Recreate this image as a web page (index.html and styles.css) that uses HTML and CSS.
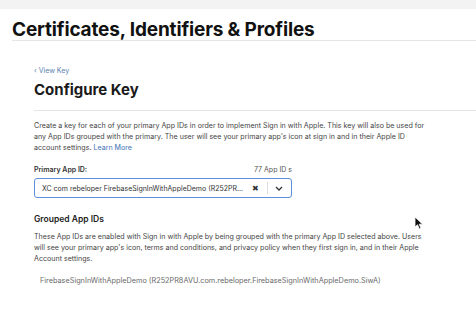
FILE: index.html
```html
<!DOCTYPE html>
<html lang="en">
<head>
  <meta charset="UTF-8">
  <meta name="viewport" content="width=device-width, initial-scale=1.0">
  <title>Configure Key</title>
  <link rel="stylesheet" href="styles.css">
</head>
<body>
  <div class="topbar"></div>

  <header class="page-header">
    <h1>Certificates, Identifiers &amp; Profiles</h1>
  </header>

  <main class="content">
    <a class="back-link" href="#">&lsaquo; View Key</a>
    <h2>Configure Key</h2>

    <div class="section">
      <p class="desc">
        <span>Create a key for each of your primary App IDs in order to implement Sign in with Apple. This key will also be used for</span>
        <span>any App IDs grouped with the primary. The user will see your primary app's icon at sign in and in their Apple ID</span>
        <span>account settings. <a href="#">Learn More</a></span>
      </p>

      <div class="field-head">
        <span class="field-label">Primary App ID:</span>
        <span class="field-count">77 App ID s</span>
      </div>

      <!-- выбранный App ID -->
      <div class="select">
        <span class="select-value">XC com rebeloper FirebaseSignInWithAppleDemo (R252PR...</span>
        <span class="select-clear">&#x2716;</span>
        <span class="select-sep"></span>
        <svg class="select-arrow" width="8" height="5" viewBox="0 0 8 5">
          <path d="M1 1 L4 4 L7 1" fill="none" stroke="#333" stroke-width="1.3"/>
        </svg>
      </div>

      <h3>Grouped App IDs</h3>
      <p class="desc">
        <span>These App IDs are enabled with Sign in with Apple by being grouped with the primary App ID selected above. Users</span>
        <span>will see your primary app's icon, terms and conditions, and privacy policy when they first sign in, and in their Apple</span>
        <span>Account settings.</span>
      </p>

      <div class="grouped-item">FirebaseSignInWithAppleDemo (R252PR8AVU.com.rebeloper.FirebaseSignInWithAppleDemo.SiwA)</div>
    </div>
  </main>

  <svg class="cursor" width="10" height="14" viewBox="0 0 10 14">
    <path d="M1 1 L1 11 L3.5 8.8 L5.4 13 L7 12.3 L5.2 8.2 L8.6 8.2 Z" fill="#111" stroke="#fff" stroke-width="0.8"/>
  </svg>
</body>
</html>
```

FILE: styles.css
```css
* { box-sizing: border-box; }
body {
  margin: 0;
  background: #ffffff;
  font-family: 'Inter', 'Liberation Sans', sans-serif;
  color: #333;
  width: 476px;
  height: 325px;
  overflow: hidden;
  position: relative;
}
.topbar {
  height: 9px;
  background: #f3f3f3;
}
.page-header {
  margin-left: 12px;
  padding-top: 10px;
  border-bottom: 1px solid #e6e6e6;
  height: 32px;
}
h1 {
  margin: 0;
  font-size: 19px;
  font-weight: 700;
  color: #111;
  letter-spacing: -0.15px;
  line-height: 22px;
  white-space: nowrap;
}
.content {
  padding: 0 36px 0 34px;
}
.back-link {
  display: block;
  margin-top: 25px;
  font-size: 7px;
  line-height: 9px;
  color: #5a7fb0;
  text-decoration: none;
}
h2 {
  margin: 6px 0 0;
  font-size: 15px;
  font-weight: 700;
  color: #1a1a1a;
  line-height: 18px;
}
.section {
  margin-top: 11px;
  border-top: 1px solid #e4e4e4;
  margin-right: -36px;
  padding-right: 36px;
  padding-top: 9px;
}
.desc {
  margin: 0;
  font-size: 7.1px;
  line-height: 11px;
  color: #444;
}
.desc span {
  display: block;
  white-space: nowrap;
}
.desc a {
  color: #3b6fb6;
  text-decoration: none;
}
.field-head {
  display: flex;
  justify-content: space-between;
  width: 258px;
  margin-top: 12px;
  font-size: 7px;
  line-height: 9px;
}
.field-label {
  font-weight: 600;
  color: #333;
}
.field-count {
  color: #555;
}
.select {
  display: flex;
  align-items: center;
  width: 258px;
  height: 20px;
  margin-top: 4px;
  border: 1px solid #5b8fd8;
  border-radius: 3px;
  padding: 0 8px 0 7px;
  font-size: 7px;
  color: #333;
}
.select-value {
  flex: 1;
  white-space: nowrap;
  overflow: hidden;
}
.select-clear {
  font-size: 8px;
  color: #333;
  margin: 0 8px 0 6px;
}
.select-sep {
  width: 1px;
  height: 12px;
  background: #ddd;
  margin-right: 7px;
}
h3 {
  margin: 16px 0 0;
  font-size: 8.5px;
  font-weight: 600;
  color: #222;
  line-height: 11px;
}
h3 + .desc {
  margin-top: 6px;
}
.grouped-item {
  margin-top: 12px;
  padding-left: 6px;
  font-size: 7.3px;
  color: #6a6a6a;
}
.cursor {
  position: absolute;
  left: 414px;
  top: 216px;
}
```
